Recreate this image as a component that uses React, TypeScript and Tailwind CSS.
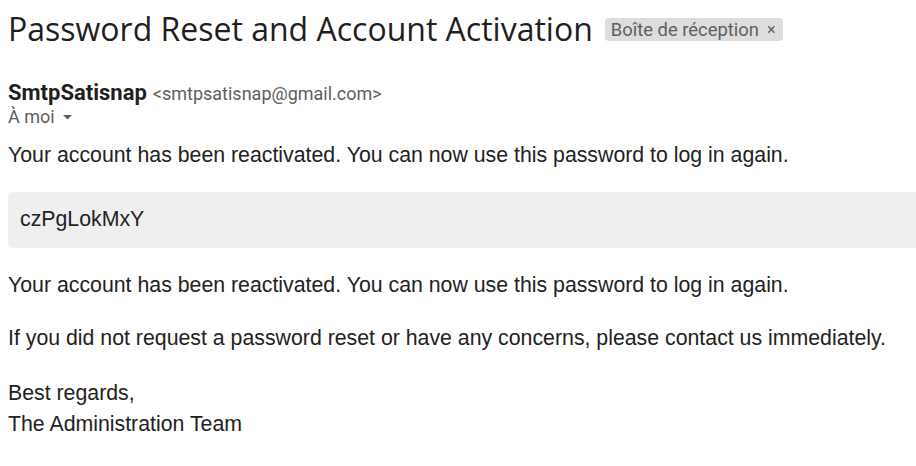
export default function App() {
  return (
    <div className="min-h-screen w-[916px] overflow-hidden bg-white">
      <div className="flex h-[42px] items-center gap-3 pl-2 mt-[8px]">
        <h1 className="whitespace-nowrap font-['Open_Sans',sans-serif] text-[32px] leading-[42px] text-[#1f1f1f]">
          Password Reset and Account Activation
        </h1>
        <span className="mt-[1px] flex h-[23px] items-center gap-[8px] rounded-[4px] bg-[#dddddd] pl-[6px] pr-[7px] font-['Roboto',sans-serif] text-[18.4px] text-[#5f5f5f]">
          Boîte de réception
          <span className="text-[16px] text-[#5f6368]">×</span>
        </span>
      </div>

      <div className="mt-[31px] pl-2 font-['Roboto',sans-serif]">
        <div className="flex h-[24px] items-baseline gap-[6px] leading-[24px]">
          <span className="text-[22px] font-bold text-[#1f1f1f]">SmtpSatisnap</span>
          <span className="text-[18px] text-[#5e5e5e]">&lt;smtpsatisnap@gmail.com&gt;</span>
        </div>
        <div className="mt-[1px] flex h-[22px] items-center gap-[8px] text-[18px] leading-[22px] text-[#5e5e5e]">
          À moi
          <svg width="9" height="5" viewBox="0 0 9 5" className="mt-[1px]">
            <path d="M0 0h9L4.5 4.5z" fill="#5e5e5e" />
          </svg>
        </div>
      </div>

      <div className="pl-2 font-['Liberation_Sans',Arial,sans-serif] text-[21.3px] text-[#222222]">
        <p className="mt-[15px] leading-[24px]">
          Your account has been reactivated. You can now use this password to log in again.
        </p>
        <div className="mt-[25px] flex h-[56px] items-center rounded-l-[6px] bg-[#efefef] pl-3">
          czPgLokMxY
        </div>
        <p className="mt-[25px] leading-[24px]">
          Your account has been reactivated. You can now use this password to log in again.
        </p>
        <p className="mt-[29px] leading-[24px]">
          If you did not request a password reset or have any concerns, please contact us immediately.
        </p>
        <p className="mt-[28px] leading-[31px]">
          Best regards,
          <br />
          The Administration Team
        </p>
      </div>
    </div>
  );
}
